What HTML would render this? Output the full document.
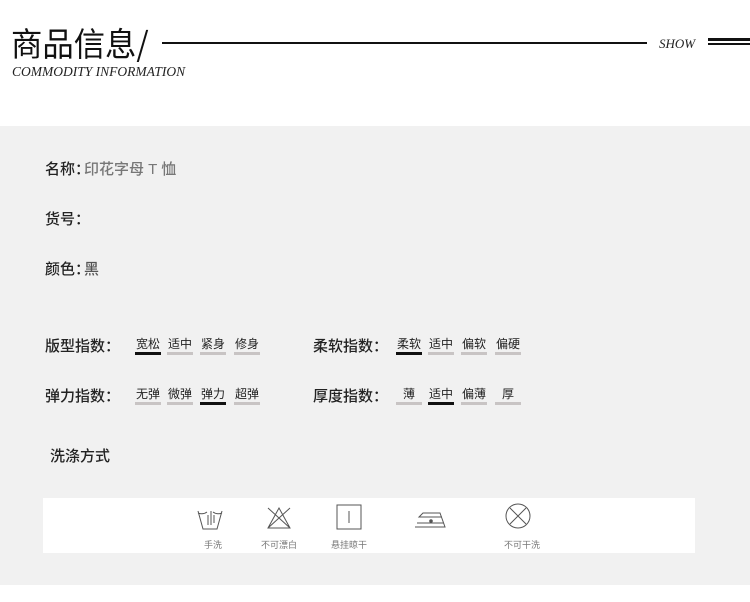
<!DOCTYPE html>
<html><head><meta charset="utf-8"><style>
*{margin:0;padding:0;box-sizing:border-box}
body{width:750px;height:602px;background:#fff;position:relative;overflow:hidden;font-family:"Liberation Sans","Noto Sans CJK SC",sans-serif;color:#222}
.a{position:absolute;white-space:nowrap}
.gray{position:absolute;left:0;top:126px;width:750px;height:459px;background:#f1f1f1}
.lbl{font-size:15px;color:#222;font-weight:500}
.opt{position:absolute;font-size:12px;color:#222;text-align:center;width:26px;height:20px;line-height:18px;border-bottom:3px solid #c8c4c4}
.opt.on{border-bottom-color:#111}
.ic{position:absolute;font-size:9px;color:#777;text-align:center}
</style></head><body>
<div class="a" style="left:11px;top:21px;font-size:33px;line-height:42px;font-family:'Noto Sans CJK SC',sans-serif;color:#111;transform:scaleX(0.95);transform-origin:left">商品信息/</div>
<div class="a" style="left:162px;top:42px;width:485px;height:2px;background:#111"></div>
<div class="a" style="left:659px;top:36px;font-family:'Liberation Serif',serif;font-style:italic;font-size:13px;color:#222">SHOW</div>
<div class="a" style="left:708px;top:38px;width:42px;height:3px;background:#111"></div>
<div class="a" style="left:708px;top:43px;width:42px;height:2px;background:#111"></div>
<div class="a" style="left:12px;top:64px;font-family:'Liberation Serif',serif;font-style:italic;font-size:13.5px;color:#222">COMMODITY INFORMATION</div>
<div class="gray"></div>
<div class="a lbl" style="left:45px;top:158px">名称：<span style="color:#777;margin-left:-6px">印花字母 T 恤</span></div>
<div class="a lbl" style="left:45px;top:208px">货号：</div>
<div class="a lbl" style="left:45px;top:258px">颜色：<span style="color:#555;margin-left:-6px">黑</span></div>
<div class="a lbl" style="left:45px;top:335px">版型指数：</div>
<div class="a lbl" style="left:45px;top:385px">弹力指数：</div>
<div class="a lbl" style="left:313px;top:335px">柔软指数：</div>
<div class="a lbl" style="left:313px;top:385px">厚度指数：</div>
<div class="opt on" style="left:135px;top:335px">宽松</div>
<div class="opt" style="left:167px;top:335px">适中</div>
<div class="opt" style="left:200px;top:335px">紧身</div>
<div class="opt" style="left:234px;top:335px">修身</div>
<div class="opt" style="left:135px;top:385px">无弹</div>
<div class="opt" style="left:167px;top:385px">微弹</div>
<div class="opt on" style="left:200px;top:385px">弹力</div>
<div class="opt" style="left:234px;top:385px">超弹</div>
<div class="opt on" style="left:396px;top:335px">柔软</div>
<div class="opt" style="left:428px;top:335px">适中</div>
<div class="opt" style="left:461px;top:335px">偏软</div>
<div class="opt" style="left:495px;top:335px">偏硬</div>
<div class="opt" style="left:396px;top:385px">薄</div>
<div class="opt on" style="left:428px;top:385px">适中</div>
<div class="opt" style="left:461px;top:385px">偏薄</div>
<div class="opt" style="left:495px;top:385px">厚</div>
<div class="a lbl" style="left:50px;top:445px">洗涤方式</div>
<div class="a" style="left:43px;top:498px;width:652px;height:55px;background:#fff"></div>
<svg class="a" style="left:195px;top:503px" width="340" height="30" fill="none" stroke="#555" stroke-width="1">
<path d="M3 8 L8 26 H22 L27 8 M3 10 Q8 12 12 9 M18 9 Q22 12 27 10 M13 12 V22 M16 8 V22 M19 12 V20"/>
<path d="M73 25 L84 5 L95 25 Z M73 5 L95 25 M95 5 L73 25"/>
<rect x="142" y="2" width="24" height="24"/><path d="M154 8 V20"/>
<path d="M220 24 H250 L245 10 H228 L224 14 H247 M222 20 H249"/><circle cx="236" cy="18" r="1.3" fill="#555"/>
<circle cx="323" cy="13" r="12"/><path d="M315 5 L331 21 M331 5 L315 21"/>
</svg>
<div class="ic" style="left:200px;top:538px;width:26px">手洗</div>
<div class="ic" style="left:257px;top:538px;width:44px">不可漂白</div>
<div class="ic" style="left:327px;top:538px;width:44px">悬挂晾干</div>
<div class="ic" style="left:500px;top:538px;width:44px">不可干洗</div>
</body></html>
